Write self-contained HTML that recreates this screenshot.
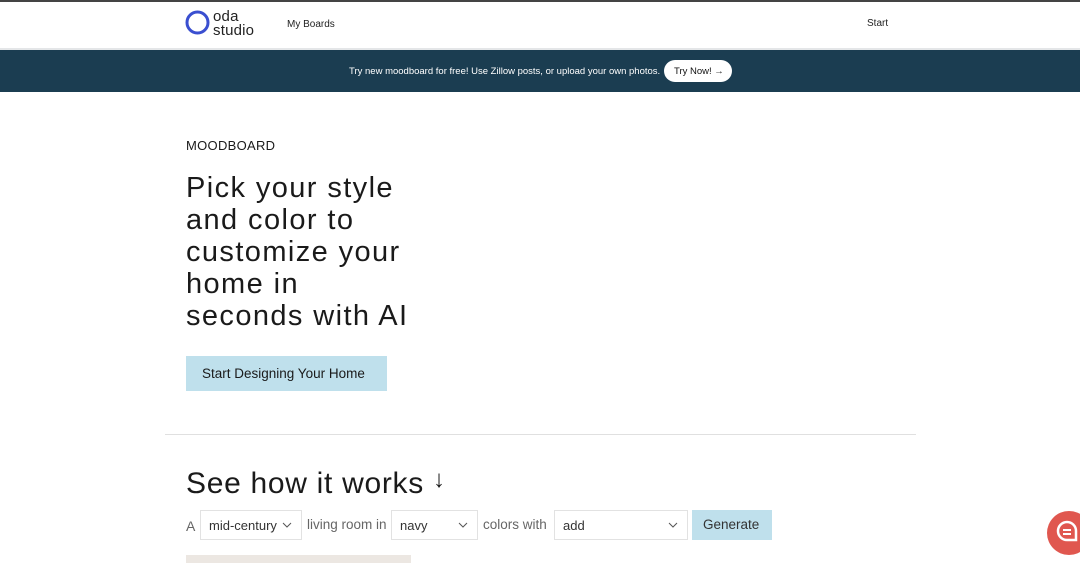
<!DOCTYPE html>
<html><head><style>
*{margin:0;padding:0;box-sizing:border-box}
body{width:1080px;height:563px;overflow:hidden;background:#fff;font-family:"Liberation Sans",sans-serif;color:#1a1a1a;position:relative}
.abs{position:absolute}
.sel{position:absolute;top:510px;height:30px;border:1px solid #e2e2e2;font-size:13px;color:#333;padding:7px 8px}
.sel svg{position:absolute;right:9px;top:11px}
</style></head><body>
<div class="abs" style="left:0;top:0;width:1080px;height:2px;background:#444"></div>
<div class="abs" style="left:0;top:48px;width:1080px;height:2px;background:#e4e6e8"></div>
<svg class="abs" style="left:185px;top:10px" width="25" height="25"><circle cx="12.5" cy="12.5" r="10.5" fill="none" stroke="#3a4fd0" stroke-width="3"/></svg>
<div class="abs" style="left:213px;top:10px;font-size:15px;line-height:14px;color:#222;letter-spacing:.2px">oda<br>studio</div>
<div class="abs" style="left:287px;top:19px;font-size:10px;color:#222">My Boards</div>
<div class="abs" style="left:867px;top:18px;font-size:10px;color:#222">Start</div>
<div class="abs" style="left:0;top:50px;width:1080px;height:42px;background:#1b3d51"></div>
<div class="abs" style="left:349px;top:66px;font-size:9.5px;color:#fff">Try new moodboard for free! Use Zillow posts, or upload your own photos.</div>
<div class="abs" style="left:664px;top:60px;width:68px;height:22px;border-radius:11px;background:#fff;font-size:9.5px;color:#111;padding:6px 0 0 10px">Try Now! →</div>
<div class="abs" style="left:186px;top:138px;font-size:13px;letter-spacing:.3px">MOODBOARD</div>
<div class="abs" style="left:186px;top:172px;font-size:29px;line-height:32px;width:235px;letter-spacing:1.4px">Pick your style and color to customize your home in seconds with AI</div>
<div class="abs" style="left:186px;top:356px;width:201px;height:35px;background:#bfe0ec;font-size:13.5px;padding:10px 0 0 16px">Start Designing Your Home</div>
<div class="abs" style="left:165px;top:434px;width:751px;height:1px;background:#e0e0e0"></div>
<div class="abs" style="left:186px;top:467px;font-size:30px;letter-spacing:.7px">See how it works <span style="font-size:24px;position:relative;top:-6px">↓</span></div>
<div class="abs" style="left:186px;top:518px;font-size:14px;color:#666">A</div>
<div class="sel" style="left:200px;width:102px">mid-century<svg width="10" height="6"><path d="M1 1l4 4 4-4" fill="none" stroke="#555"/></svg></div>
<div class="abs" style="left:307px;top:517px;font-size:13.5px;color:#666">living room in</div>
<div class="sel" style="left:391px;width:87px">navy<svg width="10" height="6"><path d="M1 1l4 4 4-4" fill="none" stroke="#555"/></svg></div>
<div class="abs" style="left:483px;top:517px;font-size:13.5px;color:#666">colors with</div>
<div class="sel" style="left:554px;width:134px">add<svg width="10" height="6"><path d="M1 1l4 4 4-4" fill="none" stroke="#555"/></svg></div>
<div class="abs" style="left:692px;top:510px;width:80px;height:30px;background:#bfe0ec;font-size:13.5px;padding:7px 0 0 11px;color:#333">Generate</div>
<div class="abs" style="left:186px;top:555px;width:225px;height:8px;background:#ece7e2"></div>
<div class="abs" style="left:1047px;top:511px;width:44px;height:44px;border-radius:50%;background:#e0574f"></div>
<svg class="abs" style="left:1055px;top:519px" width="25" height="25"><path d="M12 3a9 9 0 1 0 0 18h9v-9a9 9 0 0 0-9-9z" fill="none" stroke="#fff" stroke-width="2.5"/><path d="M8 11h8M8 15h8" stroke="#fff" stroke-width="2"/></svg>
</body></html>
